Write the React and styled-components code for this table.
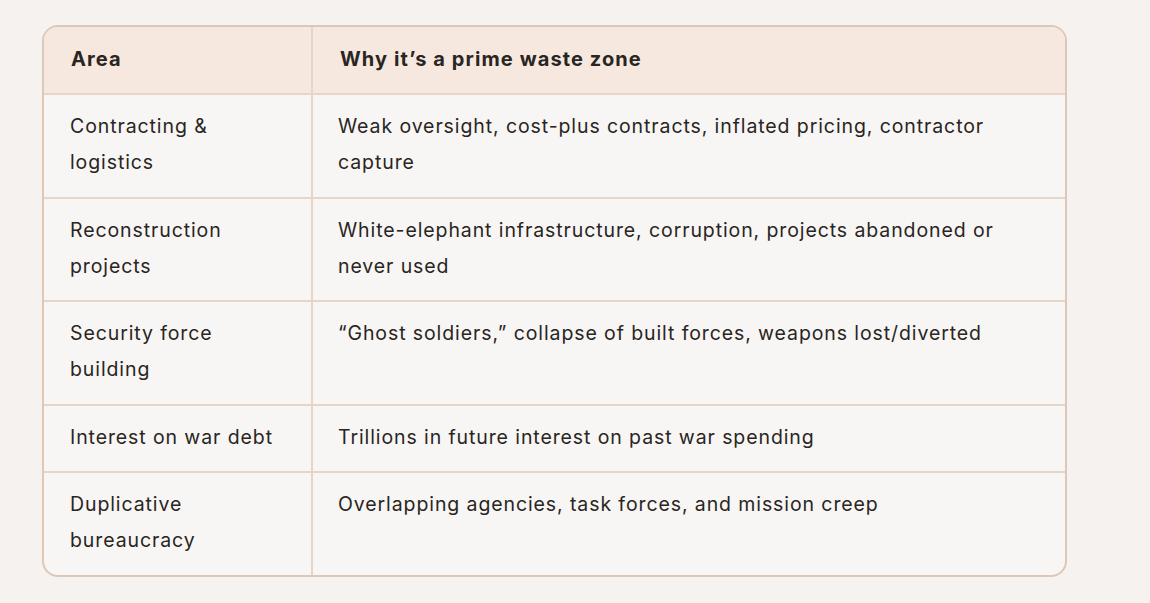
import React from 'react'
import styled, { createGlobalStyle } from 'styled-components'

const rows = [
  ['Contracting & logistics', 'Weak oversight, cost-plus contracts, inflated pricing, contractor capture'],
  ['Reconstruction projects', 'White-elephant infrastructure, corruption, projects abandoned or never used'],
  ['Security force building', '\u201cGhost soldiers,\u201d collapse of built forces, weapons lost/diverted'],
  ['Interest on war debt', 'Trillions in future interest on past war spending'],
  ['Duplicative bureaucracy', 'Overlapping agencies, task forces, and mission creep'],
]

function App() {
  return (
    <Page>
      <GlobalStyle />
      <TableWrap>
        <Table>
          <thead>
            <tr>
              <HeadCell $first>Area</HeadCell>
              <HeadCell>Why it’s a prime waste zone</HeadCell>
            </tr>
          </thead>
          <tbody>
            {rows.map(([area, why], i) => (
              <tr key={area}>
                <Cell $first $last={i === rows.length - 1}>{area}</Cell>
                <Cell $last={i === rows.length - 1}>{why}</Cell>
              </tr>
            ))}
          </tbody>
        </Table>
      </TableWrap>
    </Page>
  )
}

export default App

const GlobalStyle = createGlobalStyle`
    body {
        margin: 0;
        background: #f6f2ef;
        font-family: Inter, "Open Sans", sans-serif;
        color: #292522;
    }
`
const Page = styled.div`
    padding: 25px 0 0 42px;
    min-height: 578px;
`
const TableWrap = styled.div`
    width: 1021px;
    border: 2px solid #dcc8b9;
    border-radius: 16px;
    overflow: hidden;
    background: #f8f6f4;
`
const Table = styled.table`
    width: 100%;
    border-collapse: separate;
    border-spacing: 0;
    table-layout: fixed;
`
const HeadCell = styled.th`
    text-align: left;
    font-weight: 700;
    font-size: 20px;
    letter-spacing: 1.1px;
    line-height: 36px;
    padding: 14px 26px 16px 27px;
    background: #f6e8de;
    border-bottom: 2px solid #e6d6ca;
    border-right: ${p => p.$first ? '2px solid #e6d6ca' : 'none'};
    width: ${p => p.$first ? '214px' : 'auto'};
`
const Cell = styled.td`
    vertical-align: top;
    font-size: 19.5px;
    letter-spacing: 0.9px;
    line-height: 36.3px;
    padding: 13px 26px 16px;
    padding-left: ${p => p.$first ? '26px' : '25px'};
    border-bottom: ${p => p.$last ? 'none' : '2px solid #e6d6ca'};
    border-right: ${p => p.$first ? '2px solid #e6d6ca' : 'none'};
`
